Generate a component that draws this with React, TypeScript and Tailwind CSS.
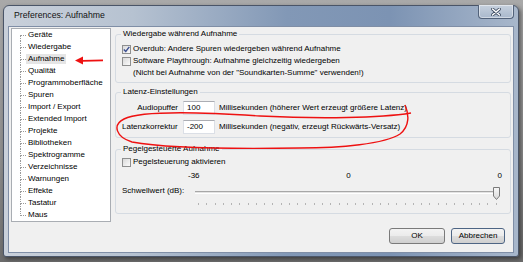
import React from 'react';

const treeItems = [
  'Geräte',
  'Wiedergabe',
  'Aufnahme',
  'Qualität',
  'Programmoberfläche',
  'Spuren',
  'Import / Export',
  'Extended Import',
  'Projekte',
  'Bibliotheken',
  'Spektrogramme',
  'Verzeichnisse',
  'Warnungen',
  'Effekte',
  'Tastatur',
  'Maus',
];

function CheckBox({ checked }: { checked?: boolean }) {
  return (
    <span className="flex h-[9px] w-[9px] shrink-0 items-center justify-center border border-[#8e8f8f] bg-[linear-gradient(135deg,#d9d9d9,#fbfbfb)]">
      {checked && (
        <svg width="7" height="7" viewBox="0 0 7 7">
          <path d="M0.8 3.4 L2.8 5.5 L6.3 0.9" fill="none" stroke="#3b4f91" strokeWidth="1.4" />
        </svg>
      )}
    </span>
  );
}

function Tree() {
  const last = treeItems.length - 1;
  return (
    <div className="ml-[2px] mt-[1px] h-[194px] w-[100px] shrink-0 border border-[#a9adb3] bg-white">
      {treeItems.map((t, i) => (
        <div key={t} className="flex h-[12px] items-stretch pl-[8px]">
          <div className="flex w-[6px] flex-col">
            <div
              className={`h-[7px] border-b border-dotted border-[#9a9a9a] ${i > 0 ? 'border-l' : ''}`}
            />
            <div className={`h-[5px] border-dotted border-[#9a9a9a] ${i < last ? 'border-l' : ''}`} />
          </div>
          <span
            className={`self-center whitespace-nowrap px-[2px] leading-[10px] ${
              t === 'Aufnahme' ? 'bg-[#e5e5e5]' : ''
            }`}
          >
            {t}
          </span>
        </div>
      ))}
    </div>
  );
}

function Group({ title, children, className }: { title: string; children: React.ReactNode; className?: string }) {
  return (
    <fieldset className={`min-w-0 rounded-[3px] border border-[#d5dbe2] p-0 ${className ?? ''}`}>
      <legend className="ml-[5px] px-[2px] leading-[12px]">{title}</legend>
      {children}
    </fieldset>
  );
}

function TextBox({ value }: { value: string }) {
  return (
    <div className="ml-[5px] h-[14px] w-[32px] border border-[#dbdfe6] border-t-[#abadb3] bg-white pl-[3px] leading-[12px]">
      {value}
    </div>
  );
}

function Slider() {
  const ticks = Array.from({ length: 37 }, (_, i) => i);
  return (
    <div className="flex w-[305px] flex-col">
      <div className="relative h-[14px]">
        <div className="mt-[7px] h-[3px] border-t border-b border-t-[#a7a7a7] border-b-white bg-[#e3e3e3]" />
        <svg className="absolute right-0 top-[3px]" width="7" height="13" viewBox="0 0 7 13">
          <defs>
            <linearGradient id="thumb" x1="0" y1="0" x2="0" y2="1">
              <stop offset="0" stopColor="#f7f7f7" />
              <stop offset="1" stopColor="#d8d8d8" />
            </linearGradient>
          </defs>
          <path d="M0.5 0.5 H6.5 V9 L3.5 12.5 L0.5 9 Z" fill="url(#thumb)" stroke="#7a7a7a" />
        </svg>
      </div>
      <div className="mt-[5px] flex justify-between px-[3px]">
        {ticks.map((i) => (
          <span key={i} className="h-[2px] w-[1px] bg-[#b4b4b4]" />
        ))}
      </div>
    </div>
  );
}

function Button({ label, focused }: { label: string; focused?: boolean }) {
  return (
    <button
      className={`h-[16px] rounded-[3px] border bg-[linear-gradient(180deg,#f3f3f3_0%,#ebebeb_50%,#dddddd_50%,#cfcfcf_100%)] leading-[14px] text-black ${
        focused ? 'w-[54px] border-[#4e6584]' : 'w-[56px] border-[#7a7a7a]'
      }`}
    >
      {label}
    </button>
  );
}

export default function App() {
  return (
    <div className="relative h-[262px] w-[523px] overflow-hidden bg-[linear-gradient(180deg,#a9a9a9_0%,#8c8c8c_60%,#6c6c6c_100%)] pl-[3px] pt-[5px] font-['Liberation_Sans',Arial,sans-serif] text-[8px] text-black">
      <div className="flex h-[252px] w-[516px] flex-col rounded-t-[6px] rounded-b-[3px] border border-[#4a5568] bg-[linear-gradient(90deg,#c9d0da_0%,#b6c2d1_25%,#8298b6_55%,#7c93b3_75%,#a8b7cb_100%)] px-[4px] pb-[3px] shadow-[2px_2px_4px_rgba(0,0,0,0.45)]">
        <div className="flex h-[20px] shrink-0 items-start">
          <span className="ml-[6px] self-center text-[8.7px] text-[#111]">Preferences: Aufnahme</span>
          <div className="ml-auto -mt-[1px] flex h-[14px] w-[36px] items-center justify-center rounded-b-[4px] border border-t-0 border-[#52627a] bg-[linear-gradient(180deg,#c7d1de,#a9b8cc)] shadow-[inset_0_0_0_1px_rgba(255,255,255,0.45)]">
            <svg width="10" height="8" viewBox="0 0 10 8">
              <path d="M1.5 1 L8.5 7 M8.5 1 L1.5 7" stroke="#3b4a60" strokeWidth="3" strokeLinecap="round" />
              <path d="M1.5 1 L8.5 7 M8.5 1 L1.5 7" stroke="#ffffff" strokeWidth="1.6" strokeLinecap="round" />
            </svg>
          </div>
        </div>

        <div className="flex flex-1 flex-col border border-[#7f8ea6] bg-[#f0f0f0]">
          <div className="flex">
            <Tree />
            <div className="ml-[4px] mr-[2px] mt-[1px] flex flex-1 flex-col">
              <Group title="Wiedergabe während Aufnahme">
                <div className="flex flex-col pb-[3px] pl-[6px] pt-[3px]">
                  <div className="flex h-[12px] items-center gap-[2px]">
                    <CheckBox checked />
                    <span>Overdub: Andere Spuren wiedergeben während Aufnahme</span>
                  </div>
                  <div className="flex h-[12px] items-center gap-[2px]">
                    <CheckBox />
                    <span>Software Playthrough: Aufnahme gleichzeitig wiedergeben</span>
                  </div>
                  <div className="flex h-[12px] items-center pl-[11px]">
                    (Nicht bei Aufnahme von der &quot;Soundkarten-Summe&quot; verwenden!)
                  </div>
                </div>
              </Group>

              <Group title="Latenz-Einstellungen" className="mt-[3px]">
                <div className="flex flex-col gap-[5px] pb-[3px] pl-[6px] pt-[3px]">
                  <div className="flex h-[14px] items-center">
                    <span className="w-[56px] whitespace-nowrap text-right">Audiopuffer</span>
                    <TextBox value="100" />
                    <span className="ml-[4px]">Millisekunden (höherer Wert erzeugt größere Latenz)</span>
                  </div>
                  <div className="flex h-[14px] items-center">
                    <span className="w-[56px] whitespace-nowrap">Latenzkorrektur</span>
                    <TextBox value="-200" />
                    <span className="ml-[4px]">Millisekunden (negativ, erzeugt Rückwärts-Versatz)</span>
                  </div>
                </div>
              </Group>

              <Group title="Pegelgesteuerte Aufnahme" className="mt-[5px]">
                <div className="flex flex-col pb-[8px] pl-[6px] pt-[1px]">
                  <div className="flex h-[12px] items-center gap-[2px]">
                    <CheckBox />
                    <span>Pegelsteuerung aktivieren</span>
                  </div>
                  <div className="ml-[66px] mt-[2px] flex h-[12px] w-[314px] items-center justify-between">
                    <span>-36</span>
                    <span>0</span>
                    <span>0</span>
                  </div>
                  <div className="mt-[2px] flex">
                    <span className="w-[73px] whitespace-nowrap leading-[14px]">Schwellwert (dB):</span>
                    <Slider />
                  </div>
                </div>
              </Group>
            </div>
          </div>

          <div className="mt-[6px] flex justify-end gap-[6px] pr-[8px]">
            <Button label="OK" />
            <Button label="Abbrechen" focused />
          </div>
        </div>
      </div>

      <svg className="pointer-events-none absolute left-0 top-0" width="523" height="262" viewBox="0 0 523 262">
        <path d="M75 60.5 L83 56.5 L83 64.5 Z" fill="#ee1111" />
        <path d="M82 60.8 L103 60.3" stroke="#ee1111" strokeWidth="1.7" />
        <path
          d="M405 105 C409 114, 410 126, 400 134 C385 144, 340 148, 300 148 C240 149, 165 148, 132 142 C116 137, 112 125, 124 119 C140 111, 200 112, 260 116 C320 119, 380 118, 411 113"
          fill="none"
          stroke="#ee1111"
          strokeWidth="1.4"
        />
      </svg>
    </div>
  );
}
